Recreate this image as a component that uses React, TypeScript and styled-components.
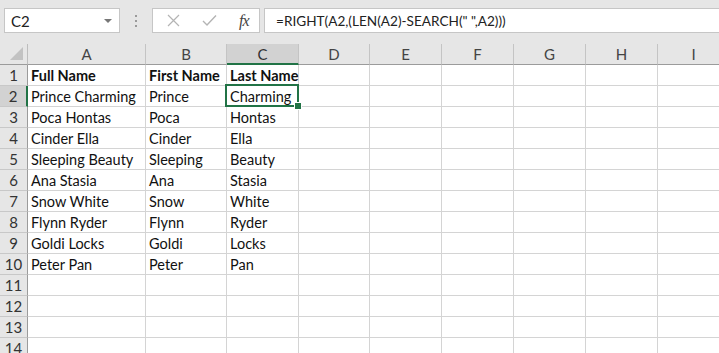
import styled, { createGlobalStyle, css } from 'styled-components'

const GlobalStyle = createGlobalStyle`
	html, body {
		margin: 0;
		padding: 0;
		background: #ffffff;
		overflow: hidden;
	}
	* {
		box-sizing: border-box;
	}
`

const GREEN = '#217346'

const columns = ['A', 'B', 'C', 'D', 'E', 'F', 'G', 'H', 'I']
const widths = [118, 81, 72, 71, 72, 72, 72, 72, 72]

const data: string[][] = [
	['Full Name', 'First Name', 'Last Name'],
	['Prince Charming', 'Prince', 'Charming'],
	['Poca Hontas', 'Poca', 'Hontas'],
	['Cinder Ella', 'Cinder', 'Ella'],
	['Sleeping Beauty', 'Sleeping', 'Beauty'],
	['Ana Stasia', 'Ana', 'Stasia'],
	['Snow White', 'Snow', 'White'],
	['Flynn Ryder', 'Flynn', 'Ryder'],
	['Goldi Locks', 'Goldi', 'Locks'],
	['Peter Pan', 'Peter', 'Pan'],
]
const ROWS = 14

const Page = styled.div`
	width: 719px;
	height: 353px;
	overflow: hidden;
	background: #e6e6e6;
	font-family: Lato, 'Noto Sans', sans-serif;
`

const FormulaBar = styled.div`
	height: 44px;
	display: flex;
	align-items: flex-start;
	padding: 8px 0 0 4px;
`

const NameBox = styled.div`
	width: 116px;
	height: 25px;
	background: #fff;
	border: 1px solid #c6c6c6;
	display: flex;
	align-items: center;
	justify-content: space-between;
	padding: 0 7px 0 6px;
	font-size: 15px;
	color: #222;
`

const DropArrow = styled.span`
	width: 0;
	height: 0;
	border-left: 4px solid transparent;
	border-right: 4px solid transparent;
	border-top: 4px solid #777;
`

const Grip = styled.div`
	width: 32px;
	height: 25px;
	display: flex;
	flex-direction: column;
	align-items: center;
	justify-content: center;
	gap: 3px;
`

const Dot = styled.span`
	width: 2px;
	height: 2px;
	background: #9a9a9a;
`

const ButtonBox = styled.div`
	width: 108px;
	height: 25px;
	background: #fff;
	border: 1px solid #c6c6c6;
	display: flex;
	align-items: center;
	padding-left: 12px;
	gap: 20px;
`

const BarButton = styled.span`
	width: 16px;
	height: 16px;
	display: flex;
	align-items: center;
	justify-content: center;
`

const Fx = styled.span`
	font-family: 'Liberation Serif', serif;
	font-style: italic;
	font-size: 16px;
	color: #444;
	margin-left: 2px;
	letter-spacing: -1px;
`

const FormulaInput = styled.div`
	flex: 1;
	height: 25px;
	margin-left: 4px;
	background: #fff;
	border: 1px solid #c6c6c6;
	border-right: none;
	display: flex;
	align-items: center;
	padding-left: 11px;
	font-size: 13.6px;
	color: #222;
	white-space: pre;
`

const Sheet = styled.div`
	display: grid;
	grid-template-columns: 28px ${widths.map((w) => `${w}px`).join(' ')};
	grid-auto-rows: 21px;
	background: #fff;
	width: max-content;
`

const Corner = styled.div`
	background: #e6e6e6;
	border-right: 1px solid #bdbdbd;
	border-bottom: 1px solid #9b9b9b;
	display: flex;
	align-items: flex-end;
	justify-content: flex-end;
	padding: 0 4px 4px 0;
`

const Triangle = styled.span`
	width: 0;
	height: 0;
	border-left: 13px solid transparent;
	border-bottom: 13px solid #c2c2c2;
`

const ColHeader = styled.div<{ $active?: boolean }>`
	background: #e6e6e6;
	border-right: 1px solid #c4c4c4;
	border-bottom: 1px solid #9b9b9b;
	display: flex;
	align-items: center;
	justify-content: center;
	font-size: 15px;
	color: #444;
	${(p) =>
		p.$active &&
		css`
			background: #d2d2d2;
			border-bottom: 2px solid ${GREEN};
			color: #333;
		`}
`

const RowHeader = styled.div<{ $active?: boolean }>`
	background: #e6e6e6;
	border-right: 1px solid #9b9b9b;
	border-bottom: 1px solid #c8c8c8;
	display: flex;
	align-items: center;
	justify-content: center;
	font-size: 15px;
	color: #333;
	${(p) =>
		p.$active &&
		css`
			background: #d2d2d2;
			border-right: 2px solid ${GREEN};
		`}
`

const Cell = styled.div<{ $bold?: boolean; $selected?: boolean }>`
	position: relative;
	border-right: 1px solid #d4d4d4;
	border-bottom: 1px solid #d4d4d4;
	display: flex;
	align-items: center;
	padding: 1px 0 0 3px;
	font-size: 14.5px;
	color: #111;
	white-space: nowrap;
	overflow: visible;
	font-weight: ${(p) => (p.$bold ? 700 : 400)};
	${(p) =>
		p.$selected &&
		css`
			&::after {
				content: '';
				position: absolute;
				left: -2px;
				top: -2px;
				right: -1px;
				bottom: -1px;
				border: 2px solid ${GREEN};
				pointer-events: none;
			}
			&::before {
				content: '';
				position: absolute;
				right: -4px;
				bottom: -4px;
				width: 6px;
				height: 6px;
				background: ${GREEN};
				border: 1px solid #fff;
				z-index: 2;
			}
		`}
`

export default function App() {
	const rows = Array.from({ length: ROWS }, (_, i) => i)
	return (
		<Page>
			<GlobalStyle />
			<FormulaBar>
				<NameBox>
					C2
					<DropArrow />
				</NameBox>
				<Grip>
					<Dot />
					<Dot />
					<Dot />
				</Grip>
				<ButtonBox>
					<BarButton>
						<svg width="13" height="13" viewBox="0 0 13 13">
							<path d="M1 1 L12 12 M12 1 L1 12" stroke="#b4b4b4" strokeWidth="1.2" fill="none" />
						</svg>
					</BarButton>
					<BarButton>
						<svg width="15" height="13" viewBox="0 0 15 13">
							<path d="M1 7 L5 11 L14 1.5" stroke="#b4b4b4" strokeWidth="1.4" fill="none" />
						</svg>
					</BarButton>
					<Fx>fx</Fx>
				</ButtonBox>
				<FormulaInput>=RIGHT(A2,(LEN(A2)-SEARCH(" ",A2)))</FormulaInput>
			</FormulaBar>
			<Sheet>
				<Corner>
					<Triangle />
				</Corner>
				{columns.map((c) => (
					<ColHeader key={c} $active={c === 'C'}>
						{c}
					</ColHeader>
				))}
				{rows.map((r) => [
					<RowHeader key={`h${r}`} $active={r === 1}>
						{r + 1}
					</RowHeader>,
					...columns.map((c, ci) => (
						<Cell key={`${c}${r}`} $bold={r === 0} $selected={r === 1 && ci === 2}>
							{data[r]?.[ci] ?? ''}
						</Cell>
					)),
				])}
			</Sheet>
		</Page>
	)
}
